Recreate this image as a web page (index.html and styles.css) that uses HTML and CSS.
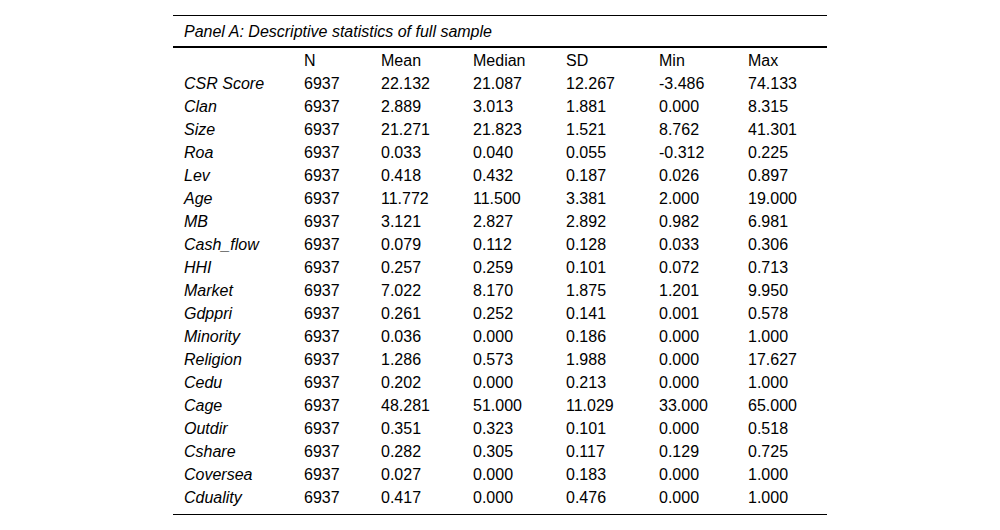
FILE: index.html
```html
<!DOCTYPE html>
<html>
<head>
<meta charset="utf-8">
<link rel="stylesheet" href="styles.css">
</head>
<body>
<div class="panel">
  <div class="title">Panel A: Descriptive statistics of full sample</div>
  <div class="rows">
    <div class="row head"><span></span><span>N</span><span>Mean</span><span>Median</span><span>SD</span><span>Min</span><span>Max</span></div>
    <div class="row"><span class="lbl">CSR Score</span><span>6937</span><span>22.132</span><span>21.087</span><span>12.267</span><span>-3.486</span><span>74.133</span></div>
    <div class="row"><span class="lbl">Clan</span><span>6937</span><span>2.889</span><span>3.013</span><span>1.881</span><span>0.000</span><span>8.315</span></div>
    <div class="row"><span class="lbl">Size</span><span>6937</span><span>21.271</span><span>21.823</span><span>1.521</span><span>8.762</span><span>41.301</span></div>
    <div class="row"><span class="lbl">Roa</span><span>6937</span><span>0.033</span><span>0.040</span><span>0.055</span><span>-0.312</span><span>0.225</span></div>
    <div class="row"><span class="lbl">Lev</span><span>6937</span><span>0.418</span><span>0.432</span><span>0.187</span><span>0.026</span><span>0.897</span></div>
    <div class="row"><span class="lbl">Age</span><span>6937</span><span>11.772</span><span>11.500</span><span>3.381</span><span>2.000</span><span>19.000</span></div>
    <div class="row"><span class="lbl">MB</span><span>6937</span><span>3.121</span><span>2.827</span><span>2.892</span><span>0.982</span><span>6.981</span></div>
    <div class="row"><span class="lbl">Cash_flow</span><span>6937</span><span>0.079</span><span>0.112</span><span>0.128</span><span>0.033</span><span>0.306</span></div>
    <div class="row"><span class="lbl">HHI</span><span>6937</span><span>0.257</span><span>0.259</span><span>0.101</span><span>0.072</span><span>0.713</span></div>
    <div class="row"><span class="lbl">Market</span><span>6937</span><span>7.022</span><span>8.170</span><span>1.875</span><span>1.201</span><span>9.950</span></div>
    <div class="row"><span class="lbl">Gdppri</span><span>6937</span><span>0.261</span><span>0.252</span><span>0.141</span><span>0.001</span><span>0.578</span></div>
    <div class="row"><span class="lbl">Minority</span><span>6937</span><span>0.036</span><span>0.000</span><span>0.186</span><span>0.000</span><span>1.000</span></div>
    <div class="row"><span class="lbl">Religion</span><span>6937</span><span>1.286</span><span>0.573</span><span>1.988</span><span>0.000</span><span>17.627</span></div>
    <div class="row"><span class="lbl">Cedu</span><span>6937</span><span>0.202</span><span>0.000</span><span>0.213</span><span>0.000</span><span>1.000</span></div>
    <div class="row"><span class="lbl">Cage</span><span>6937</span><span>48.281</span><span>51.000</span><span>11.029</span><span>33.000</span><span>65.000</span></div>
    <div class="row"><span class="lbl">Outdir</span><span>6937</span><span>0.351</span><span>0.323</span><span>0.101</span><span>0.000</span><span>0.518</span></div>
    <div class="row"><span class="lbl">Cshare</span><span>6937</span><span>0.282</span><span>0.305</span><span>0.117</span><span>0.129</span><span>0.725</span></div>
    <div class="row"><span class="lbl">Coversea</span><span>6937</span><span>0.027</span><span>0.000</span><span>0.183</span><span>0.000</span><span>1.000</span></div>
    <div class="row"><span class="lbl">Cduality</span><span>6937</span><span>0.417</span><span>0.000</span><span>0.476</span><span>0.000</span><span>1.000</span></div>
  </div>
</div>
</body>
</html>
```
FILE: styles.css
```css
html, body {
  margin: 0;
  padding: 0;
  background: #fff;
}
body {
  font-family: "Liberation Sans", Arial, sans-serif;
  font-size: 16px;
  color: #000;
}
.panel {
  width: 654px;
  margin: 15px auto 0;
  border-top: 1px solid #000;
}
.title {
  box-sizing: border-box;
  height: 32px;
  padding-top: 2px;
  line-height: 28px;
  padding-left: 11px;
  font-style: italic;
  border-bottom: 2px solid #000;
}
.rows {
  padding-bottom: 6px;
  border-bottom: 1px solid #000;
}
.row {
  box-sizing: border-box;
  display: grid;
  grid-template-columns: 120px 77px 92px 93px 93px 89px 1fr;
  padding-left: 11px;
  padding-top: 2px;
  height: 23px;
  line-height: 21px;
}
.lbl {
  font-style: italic;
}
```
